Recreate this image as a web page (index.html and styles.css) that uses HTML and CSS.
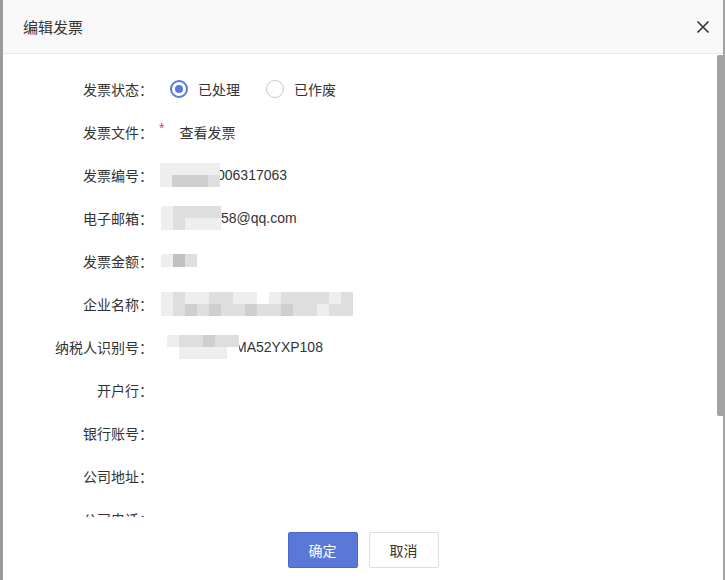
FILE: index.html
```html
<!DOCTYPE html>
<html lang="zh">
<head>
<meta charset="utf-8">
<title>编辑发票</title>
<link rel="stylesheet" href="styles.css">
</head>
<body>
<div class="backdrop-strip"></div>
<div class="dialog">
  <div class="dialog-header">
    <span class="dialog-title">编辑发票</span>
    <svg class="close" width="14" height="14" viewBox="0 0 14 14"><path d="M1.5 1.5L12.5 12.5M12.5 1.5L1.5 12.5" stroke="#333" stroke-width="1.6" fill="none"/></svg>
  </div>
  <div class="dialog-body">
    <div class="row">
      <div class="label">发票状态：</div>
      <div class="content">
        <span class="radio checked"><span class="dot"></span></span><span class="radio-text">已处理</span>
        <span class="radio"></span><span class="radio-text">已作废</span>
      </div>
    </div>
    <div class="row">
      <div class="label">发票文件：</div>
      <div class="content"><span class="req">*</span><span class="link">查看发票</span></div>
    </div>
    <div class="row">
      <div class="label">发票编号：</div>
      <div class="content">
        <span class="mosaic w5">
          <span class="mrow"><i class="c1"></i><i class="c1"></i><i class="c1"></i><i class="c1"></i><i class="c1"></i></span>
          <span class="mrow"><i class="c1"></i><i class="c3"></i><i class="c3"></i><i class="c3"></i><i class="c2"></i></span>
        </span><span class="val">006317063</span>
      </div>
    </div>
    <div class="row">
      <div class="label">电子邮箱：</div>
      <div class="content">
        <span class="mosaic w5b">
          <span class="mrow"><i class="c1"></i><i class="c2"></i><i class="c2"></i><i class="c2"></i><i class="c2"></i></span>
          <span class="mrow"><i class="c1"></i><i class="c2"></i><i class="c1"></i><i class="c1"></i><i class="c1"></i></span>
        </span><span class="val">58@qq.com</span>
      </div>
    </div>
    <div class="row">
      <div class="label">发票金额：</div>
      <div class="content">
        <span class="mosaic small">
          <span class="mrow"><i class="c1"></i><i class="c4"></i><i class="c2"></i></span>
        </span>
      </div>
    </div>
    <div class="row">
      <div class="label">企业名称：</div>
      <div class="content">
        <span class="mosaic">
          <span class="mrow"><i class="c1"></i><i class="c2"></i><i class="c1"></i><i class="c1"></i><i class="c2"></i><i class="c2"></i><i class="c1"></i><i class="c1"></i><i class="c0"></i><i class="c1"></i><i class="c2"></i><i class="c2"></i><i class="c2"></i><i class="c2"></i><i class="c1"></i><i class="c2"></i></span>
          <span class="mrow"><i class="c1"></i><i class="c2"></i><i class="c3"></i><i class="c2"></i><i class="c3"></i><i class="c2"></i><i class="c2"></i><i class="c3"></i><i class="c2"></i><i class="c2"></i><i class="c3"></i><i class="c2"></i><i class="c2"></i><i class="c1"></i><i class="c2"></i><i class="c2"></i></span>
        </span>
      </div>
    </div>
    <div class="row">
      <div class="label">纳税人识别号：</div>
      <div class="content">
        <span class="mosaic w6">
          <span class="mrow"><i class="c1"></i><i class="c2"></i><i class="c2"></i><i class="c3"></i><i class="c2"></i><i class="c2"></i></span>
          <span class="mrow"><i class="c0"></i><i class="c1"></i><i class="c1"></i><i class="c1"></i><i class="c1"></i><i class="c0"></i></span>
        </span><span class="val">MA52YXP108</span>
      </div>
    </div>
    <div class="row"><div class="label">开户行：</div><div class="content"></div></div>
    <div class="row"><div class="label">银行账号：</div><div class="content"></div></div>
    <div class="row"><div class="label">公司地址：</div><div class="content"></div></div>
    <div class="row"><div class="label">公司电话：</div><div class="content"></div></div>
    <div class="scroll-thumb"></div>
  </div>
  <div class="dialog-footer">
    <button class="btn primary">确定</button>
    <button class="btn">取消</button>
  </div>
</div>
<div class="backdrop-strip right"></div>
</body>
</html>
```

FILE: styles.css
```css
html, body {
  margin: 0;
  padding: 0;
  height: 580px;
  overflow: hidden;
}
body {
  background: #ffffff;
  display: flex;
  font-family: "Noto Sans CJK SC", "Liberation Sans", sans-serif;
  color: #333;
  font-size: 14px;
}
.backdrop-strip {
  width: 3px;
  height: 580px;
  background: #9b9b9b;
  flex: none;
}
.backdrop-strip.right {
  width: 2px;
  background: #a3a3a3;
}
.dialog {
  width: 720px;
  height: 580px;
  background: #fff;
  display: flex;
  flex-direction: column;
  flex: none;
}
.dialog-header {
  height: 53px;
  flex: none;
  background: #f8f8f8;
  border-bottom: 1px solid #e8e8e8;
  display: flex;
  align-items: center;
  justify-content: space-between;
  padding: 0 13px 0 20px;
}
.dialog-title {
  font-size: 15px;
  color: #333;
  padding-bottom: 1px;
}
.close {
  display: block;
  margin-top: 1px;
}
.dialog-body {
  flex: 1;
  overflow: hidden;
  position: relative;
  padding-top: 13px;
}
.row {
  height: 43px;
  display: flex;
  align-items: center;
}
.label {
  width: 150px;
  text-align: right;
  flex: none;
  color: #333;
  line-height: 20px;
}
.content {
  margin-left: 17px;
  display: flex;
  align-items: center;
  height: 43px;
}
.radio {
  width: 16px;
  height: 16px;
  border: 1px solid #c8c8c8;
  border-radius: 50%;
  display: flex;
  align-items: center;
  justify-content: center;
  box-sizing: content-box;
}
.radio.checked {
  border: 2px solid #5a78d8;
  width: 14px;
  height: 14px;
}
.radio .dot {
  width: 8px;
  height: 8px;
  border-radius: 50%;
  background: #5a78d8;
}
.radio-text {
  margin-left: 10px;
  margin-right: 26px;
}
.req {
  color: #f04040;
  margin-left: -11px;
  margin-right: 15px;
  font-family: "Liberation Sans", sans-serif;
  align-self: flex-start;
  margin-top: 11px;
  line-height: 14px;
}
.link {
  color: #333;
}
.val {
  font-family: "Liberation Sans", sans-serif;
  font-size: 14px;
  color: #333;
}
.mosaic {
  display: inline-flex;
  flex-direction: column;
  margin-left: -9px;
  filter: blur(0.6px);
}
.mosaic.w5 { margin-left: -10px; margin-right: -3px; }
.mosaic.w5b { margin-left: -9px; }
.mosaic.w6 { margin-left: -3px; margin-right: -4px; }
.mrow {
  display: flex;
}
.mrow i {
  display: block;
  width: 12px;
  height: 12px;
}
.mosaic.small .mrow i {
  width: 12px;
  height: 13px;
}
.c0 { background: #ffffff; }
.c1 { background: #eeeeee; }
.c2 { background: #dedede; }
.c3 { background: #cfcfcf; }
.c4 { background: #c0c0c0; }
.scroll-thumb {
  position: absolute;
  right: -1px;
  top: 1px;
  width: 7px;
  height: 361px;
  background: #a3a3a5;
  border-radius: 2px;
}
.dialog-footer {
  height: 63px;
  flex: none;
  display: flex;
  justify-content: center;
  align-items: flex-start;
  padding-top: 15px;
  box-sizing: border-box;
  gap: 11px;
}
.btn {
  width: 70px;
  height: 36px;
  border: 1px solid #dcdcdc;
  background: #fff;
  color: #333;
  font-family: "Noto Sans CJK SC", sans-serif;
  font-size: 14px;
  border-radius: 2px;
  padding: 0;
}
.btn.primary {
  background: #5a78d8;
  border-color: #4a68cc;
  color: #fff;
}
```
